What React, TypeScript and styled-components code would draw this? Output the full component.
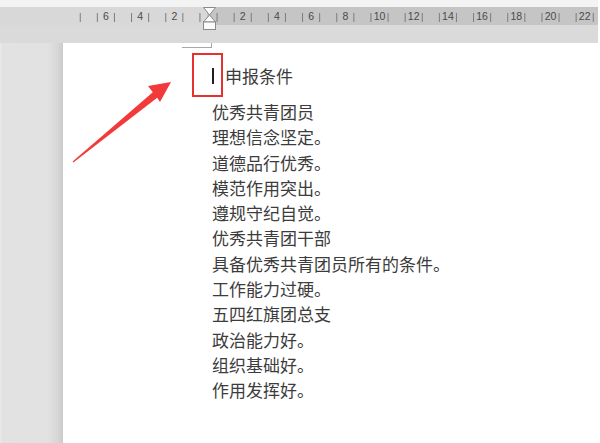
import React from "react";
import styled, { createGlobalStyle } from "styled-components";

const Global = createGlobalStyle`
  html, body { margin: 0; padding: 0; background: #ffffff; }
  body { width: 600px; height: 443px; overflow: hidden; }
  #root { width: 600px; height: 443px; }
`;

const Window = styled.div`
  width: 600px;
  height: 443px;
  display: flex;
  flex-direction: column;
  background: #ffffff;
  overflow: hidden;
`;

const Header = styled.div`
  position: relative;
  width: 598px;
  height: 43px;
  display: flex;
  flex-direction: column;
  flex-shrink: 0;
`;

const TopStrip = styled.div`
  height: 7px;
  background: #f3f3f3;
`;

const RulerBar = styled.div`
  height: 18px;
  display: flex;
`;

const RulerMargin = styled.div`
  width: 207px;
  background: #d8d8d8;
`;

const RulerText = styled.div`
  flex: 1;
  background: #c5c5c5;
`;

const Band = styled.div`
  height: 18px;
  background: #dadada;
`;

const RulerArt = styled.svg`
  position: absolute;
  left: 0;
  top: 0;
  overflow: visible;
`;

const Body = styled.div`
  flex: 1;
  display: flex;
`;

const Gutter = styled.div`
  width: 63px;
  flex-shrink: 0;
  background: linear-gradient(
    to right,
    #ebebeb 0px,
    #e2e2e2 2px,
    #e1e1e1 48px,
    #d6d6d6 58px,
    #cbcbcb 63px
  );
`;

const Page = styled.div`
  position: relative;
  flex: 1;
  background: #ffffff;
  padding: 20px 0 0 149px;
  font-family: "Noto Sans CJK SC", "Noto Sans", sans-serif;
  font-size: 17px;
  color: #3c3c3c;
`;

const CornerMark = styled.div`
  position: absolute;
  left: 119px;
  top: 0;
  width: 29px;
  height: 4px;
  border-right: 1px solid #a8a8a8;
  border-bottom: 1px solid #a8a8a8;
`;

const Heading = styled.div`
  display: flex;
  align-items: center;
  height: 25px;
  margin-bottom: 11px;
`;

const Caret = styled.span`
  display: block;
  width: 2px;
  height: 16px;
  background: #1e1e1e;
  margin-right: 11px;
`;

const Line = styled.div`
  height: 25.3px;
  line-height: 25.3px;
  white-space: nowrap;
`;

const Highlight = styled.div`
  position: absolute;
  left: 129px;
  top: 10px;
  width: 31px;
  height: 44px;
  box-sizing: border-box;
  border: 2px solid #e5322f;
`;

const Arrow = styled.svg`
  position: absolute;
  left: 0;
  top: 0;
  overflow: visible;
`;

const lines = [
  "优秀共青团员",
  "理想信念坚定。",
  "道德品行优秀。",
  "模范作用突出。",
  "遵规守纪自觉。",
  "优秀共青团干部",
  "具备优秀共青团员所有的条件。",
  "工作能力过硬。",
  "五四红旗团总支",
  "政治能力好。",
  "组织基础好。",
  "作用发挥好。",
];

const ORIGIN = 208.5;
const UNIT = 17.1;

function Ruler() {
  const ticks: number[] = [];
  for (let k = -8; k < 23; k++) {
    const x = ORIGIN + (k + 0.5) * UNIT;
    if (x > 70 && x < 596) ticks.push(x);
  }
  const nums: { x: number; label: string }[] = [];
  for (let n = -6; n <= 22; n += 2) {
    if (n === 0) continue;
    nums.push({ x: ORIGIN + n * UNIT, label: String(Math.abs(n)) });
  }
  return (
    <RulerArt width={598} height={43} viewBox="0 0 598 43">
      {ticks.map((x, i) => (
        <line key={i} x1={x} x2={x} y1={13} y2={22} stroke="#7c7c7c" strokeWidth={1} />
      ))}
      {nums.map((n, i) => (
        <text
          key={i}
          x={n.x}
          y={20}
          textAnchor="middle"
          fontFamily="'Liberation Sans', Arial, sans-serif"
          fontSize={10.5}
          fill="#4a4a4a"
        >
          {n.label}
        </text>
      ))}
      <path
        d="M203.5 7.5 H215.5 L209.5 15 Z M209.5 15 L203.5 22 H215.5 Z"
        fill="#fbfbfb"
        stroke="#8a8a8a"
        strokeWidth={1}
        strokeLinejoin="round"
      />
      <rect x={203.5} y={22} width={12} height={7.5} fill="#fbfbfb" stroke="#8a8a8a" strokeWidth={1} />
    </RulerArt>
  );
}

export default function App() {
  return (
    <Window>
      <Global />
      <Header>
        <TopStrip />
        <RulerBar>
          <RulerMargin />
          <RulerText />
        </RulerBar>
        <Band />
        <Ruler />
      </Header>
      <Body>
        <Gutter />
        <Page>
          <CornerMark />
          <Heading>
            <Caret />
            <span>申报条件</span>
          </Heading>
          {lines.map((t, i) => (
            <Line key={i}>{t}</Line>
          ))}
          <Highlight />
          <Arrow width={120} height={130} viewBox="0 0 120 130">
            <polygon
              points="9.6,118.6 89.8,49.3 85,43 108,39 97,59 94.2,54.7 10.4,119.4"
              fill="#f23a3a"
            />
          </Arrow>
        </Page>
      </Body>
    </Window>
  );
}
